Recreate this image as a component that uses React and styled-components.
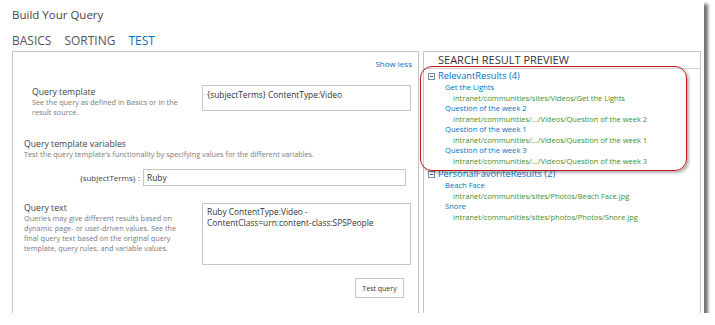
import React from "react";
import styled, { createGlobalStyle } from "styled-components";

const GlobalStyle = createGlobalStyle`
  html, body { margin: 0; padding: 0; background: #fff; }
  body { font-family: "Open Sans", "Noto Sans", sans-serif; }
  * { box-sizing: border-box; }
`;

const Frame = styled.div`
  width: 704px;
  height: 313px;
  background: #fff;
  box-shadow: 4px 4px 3px rgba(0, 0, 0, 0.55);
  padding-left: 12px;
  display: flex;
  flex-direction: column;
  overflow: hidden;
`;

const Title = styled.div`
  margin-top: 8px;
  font-size: 11.5px;
  line-height: 14px;
  color: #444;
`;

const Tabs = styled.div`
  margin-top: 12px;
  display: flex;
  gap: 13px;
`;

const Tab = styled.div`
  font-size: 12px;
  line-height: 14px;
  color: ${(p) => (p.$active ? "#0072c6" : "#555")};
`;

const Panels = styled.div`
  margin-top: 3px;
  display: flex;
  gap: 4px;
  flex: 1;
`;

const LeftPanel = styled.div`
  width: 407px;
  border: 1px solid #c6c6c6;
  border-bottom: none;
  padding: 0 6px 0 11px;
  display: flex;
  flex-direction: column;
`;

const ShowLess = styled.div`
  align-self: flex-end;
  margin-top: 6px;
  font-size: 8px;
  line-height: 12px;
  color: #0072c6;
`;

const Row = styled.div`
  display: grid;
  grid-template-columns: ${(p) => p.$cols};
  margin-top: ${(p) => p.$mt}px;
  align-items: ${(p) => p.$align || "start"};
`;

const LabelBlock = styled.div`
  padding-left: ${(p) => p.$indent || 0}px;
  padding-top: ${(p) => p.$pt || 0}px;
`;

const Label = styled.div`
  font-size: 8.7px;
  line-height: 10px;
  color: #444;
`;

const Desc = styled.div`
  font-size: 7.3px;
  line-height: 10px;
  color: #7a7a7a;
`;

const Section = styled.div`
  margin-top: ${(p) => p.$mt}px;
`;

const Box = styled.div`
  height: ${(p) => p.$h}px;
  border: 1px solid #c6c6c6;
  padding: ${(p) => p.$pad};
  font-size: 8.4px;
  line-height: 11px;
  color: #333;
`;

const VarLabel = styled.div`
  text-align: right;
  padding-right: 3px;
  font-size: 8px;
  line-height: 10px;
  color: #444;
`;

const ButtonRow = styled.div`
  display: flex;
  justify-content: flex-end;
  margin-top: 13px;
  padding-right: 8px;
`;

const Button = styled.button`
  width: 49px;
  height: 20px;
  border: 1px solid #c6c6c6;
  background: #fff;
  font-family: inherit;
  font-size: 7px;
  color: #333;
  padding: 0;
`;

const RightPanel = styled.div`
  position: relative;
  width: 278px;
  border: 1px solid #c6c6c6;
  border-bottom: none;
`;

const PanelHeader = styled.div`
  height: 17px;
  border-bottom: 1px solid #d0d0d0;
  padding-left: 14px;
  font-size: 11px;
  line-height: 16px;
  color: #333;
  text-transform: uppercase;
`;

const Results = styled.div`
  padding: 1px 0 0 4px;
`;

const Group = styled.div`
  margin-top: ${(p) => p.$mt}px;
`;

const GroupHeader = styled.div`
  display: flex;
  align-items: center;
  gap: 3px;
  font-size: 9.3px;
  line-height: 12px;
  color: #0072c6;
`;

const ItemTitle = styled.div`
  padding-left: 17px;
  font-size: 7.6px;
  line-height: 10.5px;
  color: #0072c6;
`;

const ItemUrl = styled.div`
  padding-left: 25px;
  font-size: 7.5px;
  line-height: 10.5px;
  color: #3f8f2a;
`;

const Highlight = styled.div`
  position: absolute;
  left: -4px;
  top: 14px;
  width: 267px;
  height: 105px;
  border: 1.5px solid #c0141c;
  border-radius: 12px;
  box-shadow: 2px 2px 3px rgba(0, 0, 0, 0.3);
  pointer-events: none;
`;

const CollapseIcon = () => (
  <svg width="7" height="7" viewBox="0 0 7 7">
    <rect x="0.5" y="0.5" width="6" height="6" fill="#fff" stroke="#7a8ea8" />
    <line x1="2" y1="3.5" x2="5" y2="3.5" stroke="#4a5e7a" />
  </svg>
);

const groups = [
  {
    name: "RelevantResults (4)",
    items: [
      ["Get the Lights", "intranet/communities/sites/Videos/Get the Lights"],
      ["Question of the week 2", "intranet/communities/.../Videos/Question of the week 2"],
      ["Question of the week 1", "intranet/communities/.../Videos/Question of the week 1"],
      ["Question of the week 3", "intranet/communities/.../Videos/Question of the week 3"],
    ],
  },
  {
    name: "PersonalFavoriteResults (2)",
    items: [
      ["Beach Face", "intranet/communities/sites/Photos/Beach Face.jpg"],
      ["Snore", "intranet/communities/sites/photos/Photos/Snore.jpg"],
    ],
  },
];

export default function App() {
  return (
    <>
      <GlobalStyle />
      <Frame>
        <Title>Build Your Query</Title>
        <Tabs>
          <Tab>BASICS</Tab>
          <Tab>SORTING</Tab>
          <Tab $active>TEST</Tab>
        </Tabs>
        <Panels>
          <LeftPanel>
            <ShowLess>Show less</ShowLess>
            <Row $cols="178px 209px" $mt={15}>
              <LabelBlock $indent={8} $pt={2}>
                <Label>Query template</Label>
                <Desc>
                  See the query as defined in Basics or in the
                  <br />
                  result source.
                </Desc>
              </LabelBlock>
              <Box $h={26} $pad="3px 4px">{"{subjectTerms} ContentType:Video"}</Box>
            </Row>
            <Section $mt={22}>
              <Label>Query template variables</Label>
              <Desc>
                Test the query template's functionality by specifying values for the different variables.
              </Desc>
            </Section>
            <Row $cols="119px 263px" $mt={10} $align="center">
              <VarLabel>{"{subjectTerms} :"}</VarLabel>
              <Box $h={17} $pad="2px 3px">Ruby</Box>
            </Row>
            <Row $cols="178px 209px" $mt={17}>
              <LabelBlock>
                <Label>Query text</Label>
                <Desc>
                  Queries may give different results based on
                  <br />
                  dynamic page- or user-driven values. See the
                  <br />
                  final query text based on the original query
                  <br />
                  template, query rules, and variable values.
                </Desc>
              </LabelBlock>
              <Box $h={62} $pad="2px 4px">
                Ruby ContentType:Video -
                <br />
                ContentClass=urn:content-class:SPSPeople
              </Box>
            </Row>
            <ButtonRow>
              <Button>Test query</Button>
            </ButtonRow>
          </LeftPanel>
          <RightPanel>
            <PanelHeader>Search Result Preview</PanelHeader>
            <Results>
              {groups.map((g, gi) => (
                <Group key={g.name} $mt={gi === 0 ? 0 : 2}>
                  <GroupHeader>
                    <CollapseIcon />
                    {g.name}
                  </GroupHeader>
                  {g.items.map(([t, u]) => (
                    <React.Fragment key={t}>
                      <ItemTitle>{t}</ItemTitle>
                      <ItemUrl>{u}</ItemUrl>
                    </React.Fragment>
                  ))}
                </Group>
              ))}
            </Results>
            <Highlight />
          </RightPanel>
        </Panels>
      </Frame>
    </>
  );
}
